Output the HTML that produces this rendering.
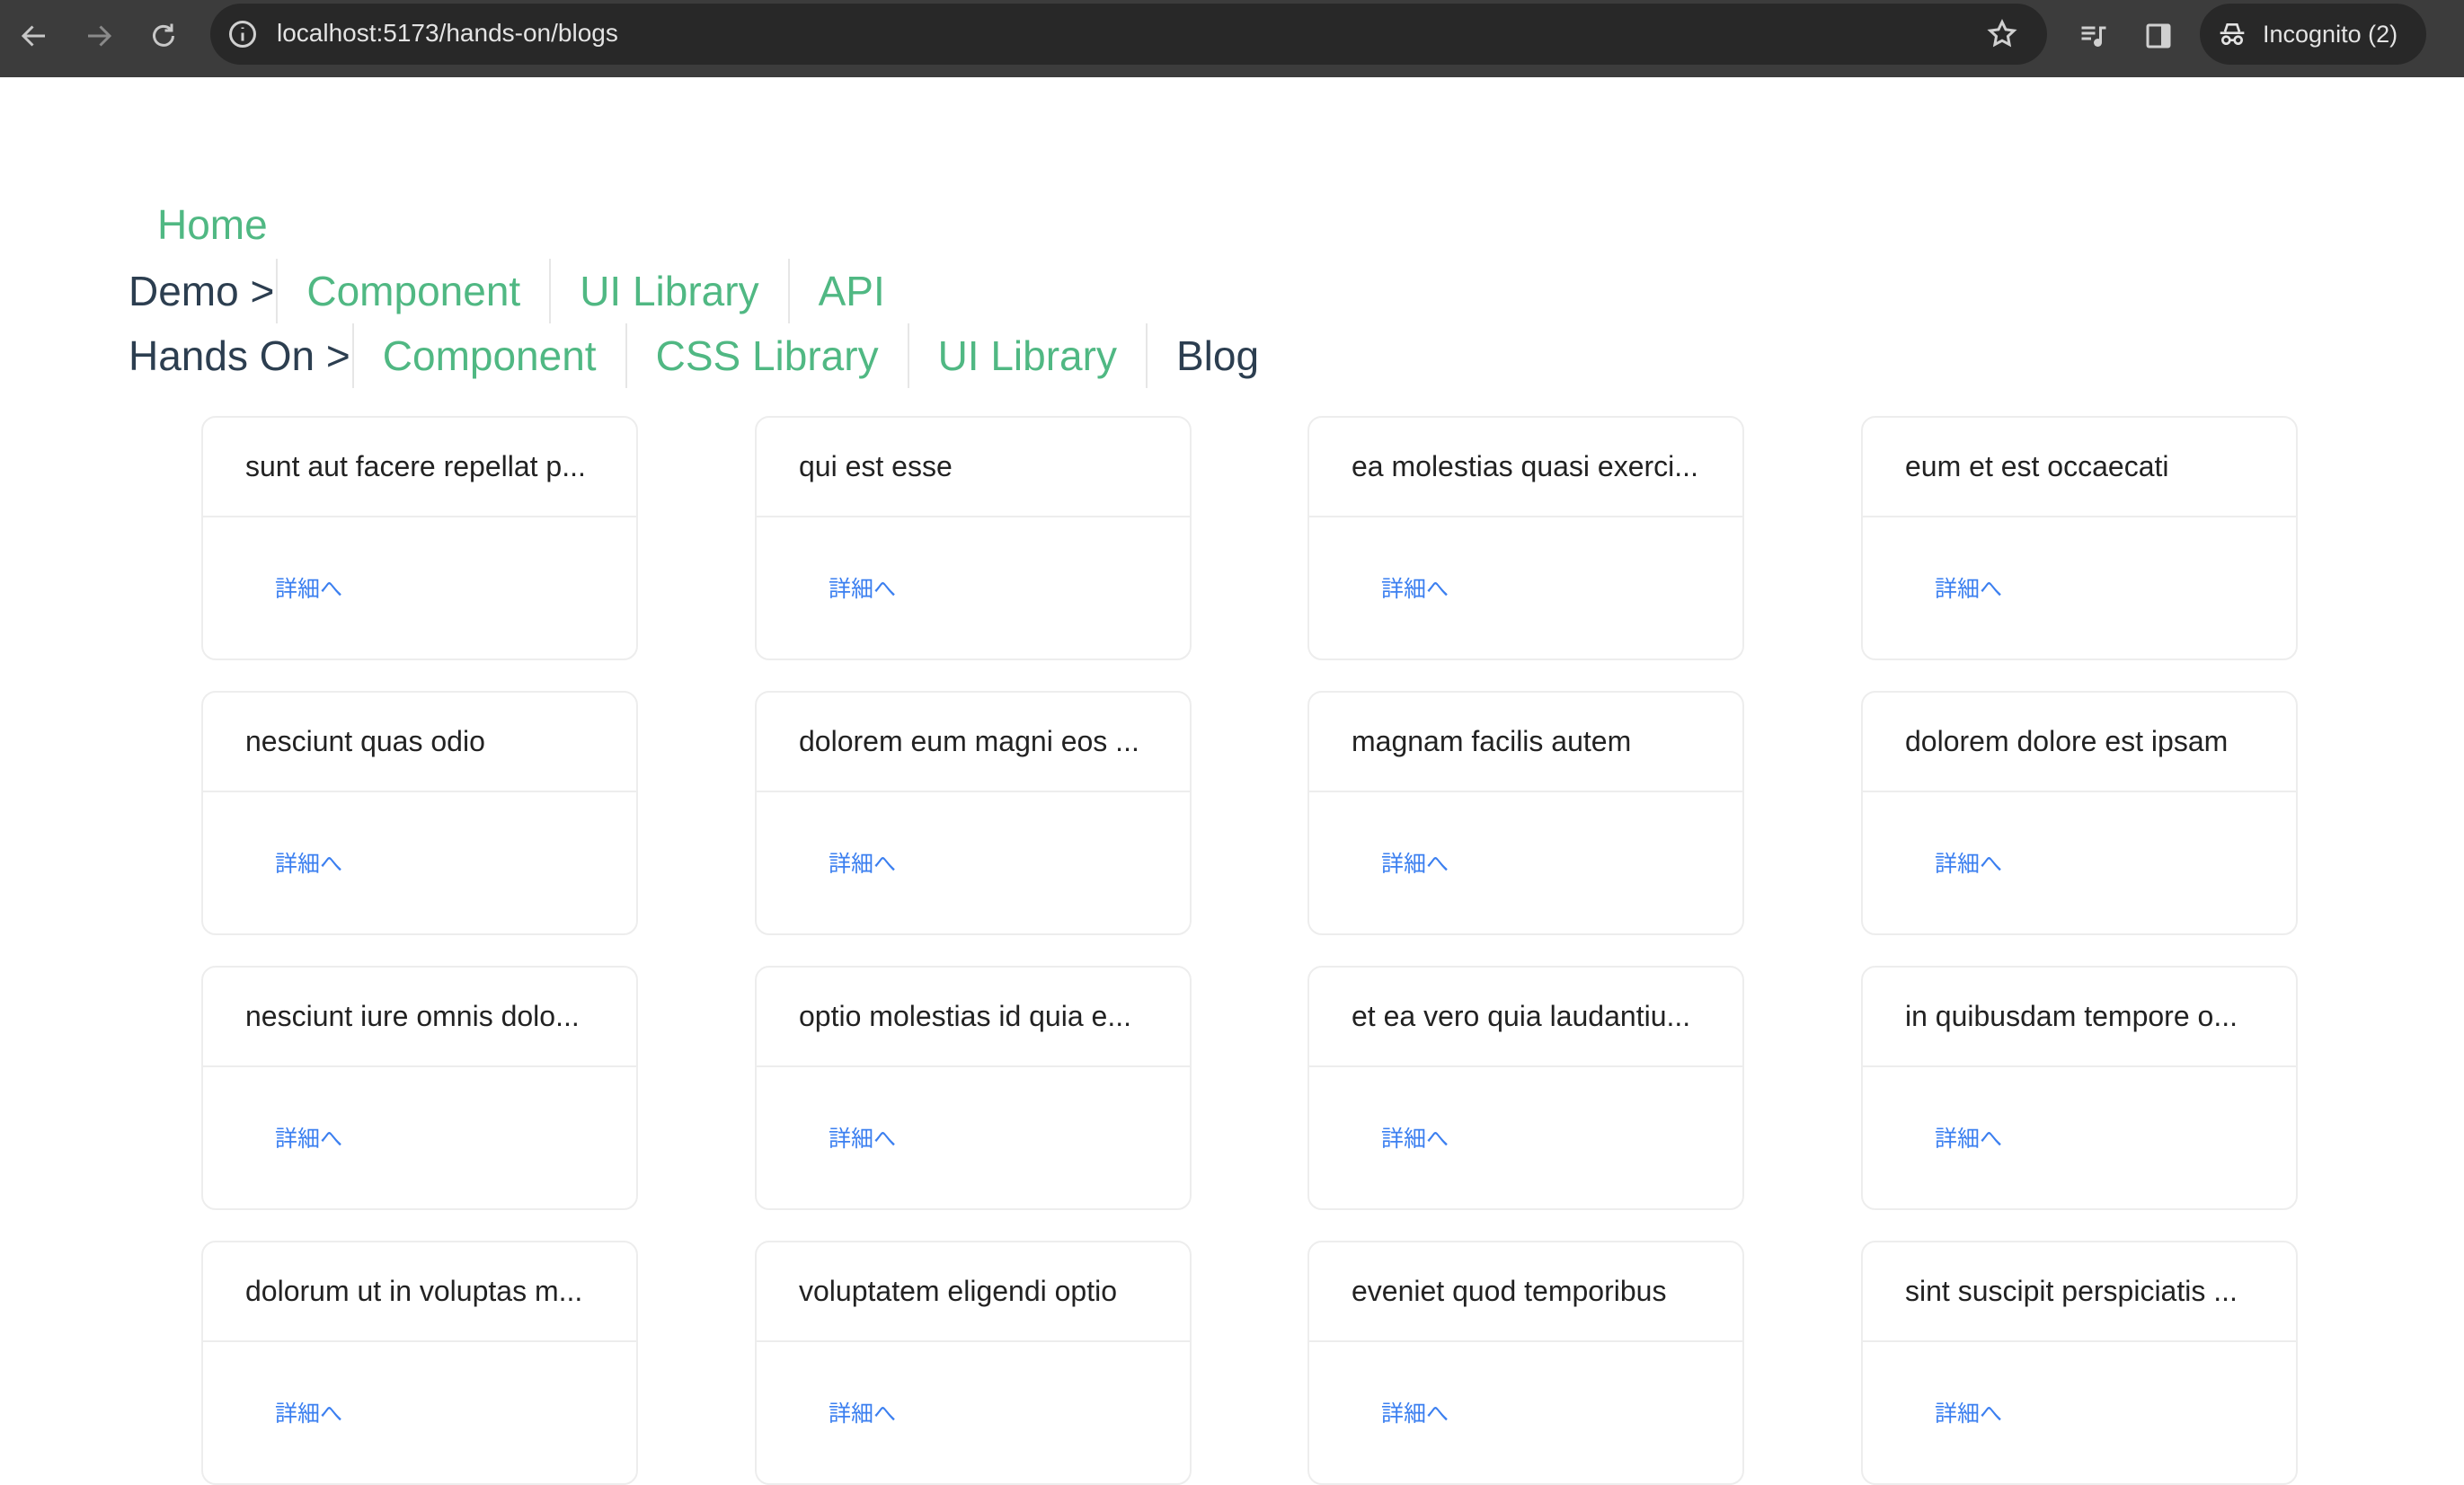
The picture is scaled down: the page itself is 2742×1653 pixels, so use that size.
<!DOCTYPE html>
<html><head><meta charset="utf-8"><style>
*{box-sizing:border-box;margin:0;padding:0}
body{width:2742px;height:1646px;background:#fff;overflow:hidden;font-family:"Liberation Sans","Noto Sans CJK JP",sans-serif;position:relative}
.tb{position:absolute;left:0;top:0;width:2742px;height:86px;background:#3c3c3c}
.addr{position:absolute;left:234px;top:4px;width:2044px;height:68px;border-radius:34px;background:#282828}
.addr .t{position:absolute;left:74px;top:17px;font-size:28px;color:#e3e3e3}
.pill{position:absolute;left:2448px;top:4px;width:252px;height:68px;border-radius:34px;background:#282828;color:#e3e3e3;font-size:27px}
.nav{position:absolute;font-size:46px;line-height:72px;white-space:nowrap}
.nav span{display:inline-block;padding:0 32px;border-left:2px solid #e6e6e6;color:#50b883}
.nav .d{color:#2c3e50;padding:0 2px 0 0;border:none}
.nav .b{color:#2c3e50}
.card{position:absolute;width:486px;height:272px;border:2px solid #ededed;border-radius:16px}
.card .h{height:111px;border-bottom:2px solid #ededed;padding:0 0 0 47px;font-size:32px;line-height:109px;color:#222}
.card .l{position:absolute;left:80px;top:171px;font-size:25px;color:#3b7ff0}
</style></head><body>
<div class="tb">
<svg style="position:absolute;left:20px;top:22px" width="36" height="36" viewBox="0 0 24 24" fill="none" stroke="#c8c8c8" stroke-width="2"><path d="M20 12H5M11 5l-7 7 7 7"/></svg>
<svg style="position:absolute;left:92px;top:22px" width="36" height="36" viewBox="0 0 24 24" fill="none" stroke="#8a8a8a" stroke-width="2"><path d="M4 12h15M13 5l7 7-7 7"/></svg>
<svg style="position:absolute;left:164px;top:22px" width="36" height="36" viewBox="0 0 24 24" fill="none" stroke="#c8c8c8" stroke-width="2"><path d="M19 12a7 7 0 1 1-2-5M18 3v5h-5"/></svg>
<div class="addr"><svg style="position:absolute;left:18px;top:16px" width="36" height="36" viewBox="0 0 24 24" fill="none" stroke="#d0d0d0" stroke-width="2"><circle cx="12" cy="12" r="9"/><path d="M12 11v6M12 7v1"/></svg><div class="t">localhost:5173/hands-on/blogs</div>
<svg style="position:absolute;left:1976px;top:16px" width="36" height="36" viewBox="0 0 24 24" fill="none" stroke="#d0d0d0" stroke-width="2"><path d="M12 3l2.7 5.6 6.1.8-4.5 4.2 1.1 6.1L12 16.8l-5.4 2.9 1.1-6.1-4.5-4.2 6.1-.8z"/></svg></div>
<svg style="position:absolute;left:2312px;top:22px" width="36" height="36" viewBox="0 0 24 24" fill="#d0d0d0"><rect x="3" y="5" width="10" height="2"/><rect x="3" y="9" width="10" height="2"/><rect x="3" y="13" width="7" height="2"/><rect x="16" y="5" width="5" height="2"/><rect x="16" y="5" width="2" height="12"/><circle cx="15" cy="17" r="3"/></svg>
<svg style="position:absolute;left:2384px;top:22px" width="36" height="36" viewBox="0 0 24 24"><rect x="3" y="3" width="18" height="18" rx="2" fill="#d0d0d0"/><rect x="5" y="5" width="9" height="14" fill="#3c3c3c"/></svg>
<div class="pill"><svg style="position:absolute;left:20px;top:18px" width="32" height="32" viewBox="0 0 24 24" fill="none" stroke="#e3e3e3" stroke-width="2"><path d="M6 10l2-6h8l2 6M2 11h20"/><circle cx="7" cy="17" r="3"/><circle cx="17" cy="17" r="3"/><path d="M10 17h4"/></svg><span style="position:absolute;left:70px;top:19px">Incognito (2)</span></div>
</div>
<div class="nav" style="left:175px;top:214px;color:#50b883">Home</div>
<div class="nav" style="left:143px;top:288px"><span class="d">Demo &gt;</span><span>Component</span><span>UI Library</span><span>API</span></div>
<div class="nav" style="left:143px;top:360px"><span class="d">Hands On &gt;</span><span>Component</span><span>CSS Library</span><span>UI Library</span><span class="b">Blog</span></div>
<div class="card" style="left:224px;top:463px"><div class="h">sunt aut facere repellat p...</div><div class="l">詳細へ</div></div>
<div class="card" style="left:840px;top:463px"><div class="h">qui est esse</div><div class="l">詳細へ</div></div>
<div class="card" style="left:1455px;top:463px"><div class="h">ea molestias quasi exerci...</div><div class="l">詳細へ</div></div>
<div class="card" style="left:2071px;top:463px"><div class="h">eum et est occaecati</div><div class="l">詳細へ</div></div>
<div class="card" style="left:224px;top:769px"><div class="h">nesciunt quas odio</div><div class="l">詳細へ</div></div>
<div class="card" style="left:840px;top:769px"><div class="h">dolorem eum magni eos ...</div><div class="l">詳細へ</div></div>
<div class="card" style="left:1455px;top:769px"><div class="h">magnam facilis autem</div><div class="l">詳細へ</div></div>
<div class="card" style="left:2071px;top:769px"><div class="h">dolorem dolore est ipsam</div><div class="l">詳細へ</div></div>
<div class="card" style="left:224px;top:1075px"><div class="h">nesciunt iure omnis dolo...</div><div class="l">詳細へ</div></div>
<div class="card" style="left:840px;top:1075px"><div class="h">optio molestias id quia e...</div><div class="l">詳細へ</div></div>
<div class="card" style="left:1455px;top:1075px"><div class="h">et ea vero quia laudantiu...</div><div class="l">詳細へ</div></div>
<div class="card" style="left:2071px;top:1075px"><div class="h">in quibusdam tempore o...</div><div class="l">詳細へ</div></div>
<div class="card" style="left:224px;top:1381px"><div class="h">dolorum ut in voluptas m...</div><div class="l">詳細へ</div></div>
<div class="card" style="left:840px;top:1381px"><div class="h">voluptatem eligendi optio</div><div class="l">詳細へ</div></div>
<div class="card" style="left:1455px;top:1381px"><div class="h">eveniet quod temporibus</div><div class="l">詳細へ</div></div>
<div class="card" style="left:2071px;top:1381px"><div class="h">sint suscipit perspiciatis ...</div><div class="l">詳細へ</div></div>
</body></html>
